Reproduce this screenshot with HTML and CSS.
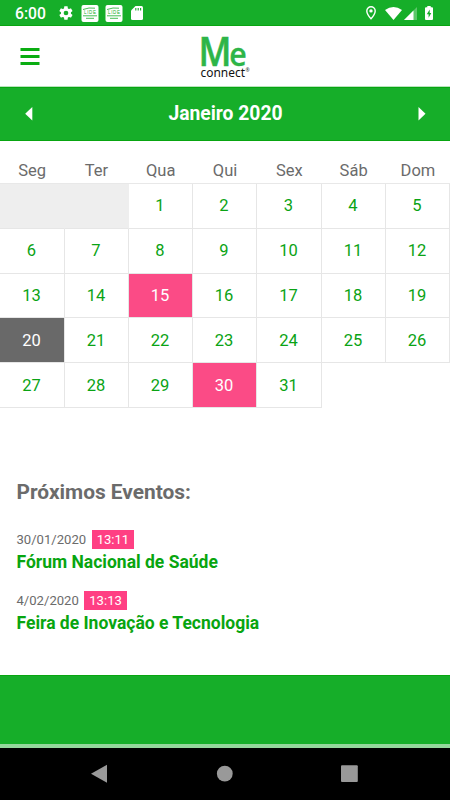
FILE: index.html
```html
<!DOCTYPE html>
<html lang="pt-BR">
<head>
<meta charset="utf-8">
<title>Me connect</title>
<link rel="stylesheet" href="styles.css">
</head>
<body>
<div class="statusbar">
  <span class="clock">6:00</span>
  <svg class="gear" width="16" height="16" viewBox="0 0 24 24"><path fill="#fff" d="M19.4 13a7.500 7.500 0 0 0 0-2l2.100-1.600c.2-.2.3-.4.1-.7l-2-3.400c-.1-.2-.4-.3-.6-.2l-2.500 1a7.300 7.300 0 0 0-1.700-1L14.400 2.400c0-.2-.2-.4-.5-.4h-4c-.2 0-.4.200-.5.400L9 5.100a7.700 7.700 0 0 0-1.700 1l-2.500-1c-.2-.1-.5 0-.6.2l-2 3.400c-.1.200-.1.500.1.700L4.500 11a7.900 7.900 0 0 0 0 2l-2.200 1.600c-.2.2-.2.400-.1.700l2 3.400c.1.200.4.300.6.200l2.500-1c.5.400 1.100.7 1.700 1l.4 2.700c.1.200.3.400.5.400h4c.3 0 .5-.2.500-.4l.4-2.700c.6-.3 1.200-.6 1.700-1l2.500 1c.2.100.5 0 .6-.2l2-3.400c.2-.3.100-.5-.1-.7zM12 15.500a3.500 3.500 0 1 1 0-7 3.500 3.500 0 0 1 0 7z"/></svg>
  <svg class="lide" width="18" height="17" viewBox="0 0 18 17"><rect x=".5" width="17" height="17" rx="2" fill="#fff"/><path d="M2 4.500Q8 2.200 14 3.200M2 10.800h14M5 13.300h8" fill="none" stroke="#16ae29" stroke-width=".8"/><text x="3" y="9.200" textLength="12" class="lide-text">LIDE</text></svg>
  <svg class="lide" width="18" height="17" viewBox="0 0 18 17"><rect x=".5" width="17" height="17" rx="2" fill="#fff"/><path d="M2 4.500Q8 2.200 14 3.200M2 10.800h14M5 13.300h8" fill="none" stroke="#16ae29" stroke-width=".8"/><text x="3" y="9.200" textLength="12" class="lide-text">LIDE</text></svg>
  <svg class="sdcard" width="12" height="14" viewBox="0 0 12 14"><path fill="#fff" d="M4.500 0H10.500Q12 0 12 1.500V12.500Q12 14 10.500 14H1.500Q0 14 0 12.500V4.500z"/><path d="M4.800 2v2.500M7.200 2v2.500M9.600 2v2.500" stroke="#16ae29" stroke-width="1.100"/></svg>
  <span class="spacer"></span>
  <svg class="pin" width="10" height="14" viewBox="0 0 10 14"><path d="M5 .7A4.200 4.200 0 0 0 .8 4.900C.8 8 5 12.700 5 12.700S9.200 8 9.200 4.900A4.200 4.200 0 0 0 5 .7z" fill="none" stroke="#fff" stroke-width="1.400"/><circle cx="5" cy="4.900" r="1.700" fill="#fff"/></svg>
  <svg class="wifi" width="17" height="13" viewBox="0 0 17 13"><path fill="#fff" d="M0 3Q8.500-3 17 3L8.500 13z"/></svg>
  <svg class="signal" width="13" height="13" viewBox="0 0 13 13"><path fill="#fff" opacity=".3" d="M0 13L13 0v13z"/><path fill="#fff" d="M0 13L9.500 3.500V13z"/></svg>
  <svg class="battery" width="8" height="14" viewBox="0 0 8 14"><path fill="#fff" d="M2.300 0h3.400v1.300H7q1 0 1 1V13q0 1-1 1H1q-1 0-1-1V2.300q0-1 1-1h1.300z"/><path fill="#16ae29" d="M4.700 3.500L1.800 8.300h1.800v3.500L6.300 7H4.700z"/></svg>
</div>
<header class="appbar">
  <svg class="menu" width="20" height="18" viewBox="0 0 20 18"><path d="M.5 1.500h19M.5 8.500h19M.5 15.500h19" stroke="#0aad12" stroke-width="3"/></svg>
  <svg class="logo" width="64" height="58" viewBox="-5 -7 64 58">
    <text class="logo-me" x="-2.500" y="31.500" textLength="33" lengthAdjust="spacingAndGlyphs">M</text>
    <text class="logo-e" x="28.300" y="31.500" textLength="17.500" lengthAdjust="spacingAndGlyphs">e</text>
    <text class="logo-connect" x="-.5" y="42.500" textLength="44.500" lengthAdjust="spacingAndGlyphs">connect</text>
    <text class="logo-reg" x="44.500" y="38">®</text>
  </svg>
</header>
<div class="monthbar">
  <svg width="8" height="14" viewBox="0 0 8 14"><path fill="#fff" d="M7.300 0v13.500L.2 6.750z"/></svg>
  <h1 class="month">Janeiro 2020</h1>
  <svg width="8" height="14" viewBox="0 0 8 14"><path fill="#fff" d="M.5 0v13.500L7.500 6.750z"/></svg>
</div>
<div class="weekdays"><span>Seg</span><span>Ter</span><span>Qua</span><span>Qui</span><span>Sex</span><span>Sáb</span><span>Dom</span></div>
<div class="calendar">
  <span class="day blank"></span><span class="day blank"></span><span class="day">1</span><span class="day">2</span><span class="day">3</span><span class="day">4</span><span class="day">5</span>
  <span class="day">6</span><span class="day">7</span><span class="day">8</span><span class="day">9</span><span class="day">10</span><span class="day">11</span><span class="day">12</span>
  <span class="day">13</span><span class="day">14</span><span class="day event">15</span><span class="day">16</span><span class="day">17</span><span class="day">18</span><span class="day">19</span>
  <span class="day today">20</span><span class="day">21</span><span class="day">22</span><span class="day">23</span><span class="day">24</span><span class="day">25</span><span class="day">26</span>
  <span class="day">27</span><span class="day">28</span><span class="day">29</span><span class="day event">30</span><span class="day">31</span>
</div>
<section class="events">
  <h2 class="events-title">Próximos Eventos:</h2>
  <article class="item">
    <div class="when"><span>30/01/2020</span><span class="time">13:11</span></div>
    <h3 class="name">Fórum Nacional de Saúde</h3>
  </article>
  <article class="item">
    <div class="when"><span>4/02/2020</span><span class="time">13:13</span></div>
    <h3 class="name">Feira de Inovação e Tecnologia</h3>
  </article>
</section>
<footer class="footer"></footer>
<nav class="navbar">
  <svg width="450" height="52" viewBox="0 0 450 52"><g fill="#999"><path d="M91 25.700L107 16.800v17.900z"/><circle cx="224.800" cy="25.700" r="7.900"/><rect x="341" y="17.300" width="16.800" height="16.700" rx="1"/></g></svg>
</nav>
</body>
</html>
```
FILE: styles.css
```css
* { box-sizing: border-box; }
body {
  margin: 0;
  width: 450px;
  height: 800px;
  overflow: hidden;
  display: flex;
  flex-direction: column;
  background: #fff;
  font-family: Roboto, "Liberation Sans", sans-serif;
  color: #6b6b6b;
}
h1, h2, h3 { margin: 0; }
svg { display: block; flex: none; }
.statusbar {
  height: 26px;
  flex: none;
  display: flex;
  align-items: center;
  padding: 1px 17px 0 15px;
  background: #16ae29;
  border-bottom: 1px solid #08a511;
  color: #fff;
}
.clock { width: 43px; font-size: 15.700px; font-weight: 500; line-height: 24px; padding-top: 2px; }
.gear { margin-right: 7px; }
.lide { margin-right: 6px; }
.lide-text { font: 400 4.500px "Liberation Sans", sans-serif; fill: #16ae29; }
.sdcard { margin-left: 2px; }
.spacer { flex: 1; }
.pin { margin-right: 9px; }
.wifi { margin-right: 2px; }
.signal { margin-right: 8px; }
.appbar {
  height: 61px;
  flex: none;
  display: flex;
  align-items: center;
  padding-left: 20px;
  border-bottom: 1px solid #b8e4bd;
}
.menu { margin-top: 2px; }
.logo { margin-left: 156px; }
.logo-me { font: 600 39px "Open Sans", sans-serif; fill: #2db548; stroke: #2db548; stroke-width: .5px; }
.logo-e { font: 600 33px "Open Sans", sans-serif; fill: #2db548; stroke: #2db548; stroke-width: .3px; }
.logo-connect { font: 400 12px "Noto Sans", sans-serif; fill: #111; }
.logo-reg { font: 5px "Noto Sans", sans-serif; fill: #333; }
.monthbar {
  height: 54px;
  flex: none;
  display: flex;
  align-items: center;
  justify-content: space-between;
  padding: 0 24px 0 25px;
  background: #16ae29;
  border-top: 1px solid #08a511;
  border-bottom: 1px solid #08a511;
}
.month { font-size: 19.300px; font-weight: 700; line-height: 22px; color: #fff; }
.weekdays {
  height: 42px;
  flex: none;
  display: grid;
  grid-template-columns: repeat(7, 64.3px);
  padding-top: 20px;
  text-align: center;
  font-size: 16.500px;
  line-height: 20px;
}
.calendar {
  height: 225px;
  flex: none;
  display: grid;
  grid-template-columns: 65px 64px 64px 64px 65px 64px 64px;
  grid-template-rows: repeat(5, 44.8px);
  border-top: 1px solid #e8e8e8;
}
.day {
  display: flex;
  align-items: center;
  justify-content: center;
  padding-right: 1px;
  border-right: 1px solid #e6e6e6;
  border-bottom: 1px solid #e6e6e6;
  font-size: 16.500px;
  color: #0aa314;
}
.blank { background: #eee; border-right-color: #eee; }
.event { background: #fb4b86; color: #fff; }
.today { background: #696969; color: #fff; }
.events { height: 267px; flex: none; padding: 71px 16.500px 0; }
.events-title { font-size: 20.900px; line-height: 26px; font-weight: 700; }
.item { margin-top: 25px; height: 36px; }
.when { display: flex; align-items: center; gap: 5.500px; height: 19px; font-size: 13.100px; }
.time { height: 19px; width: 42.500px; line-height: 19px; text-align: center; color: #fff; background: #ff3f83; }
.name { font-size: 17.500px; line-height: 26px; font-weight: 700; color: #08a50f; white-space: nowrap; }
.footer {
  height: 73px;
  flex: none;
  background: #16ae29;
  border-top: 1px solid #08a511;
  border-bottom: 4px solid #94d79b;
}
.navbar { flex: 1; background: #000; }
```
